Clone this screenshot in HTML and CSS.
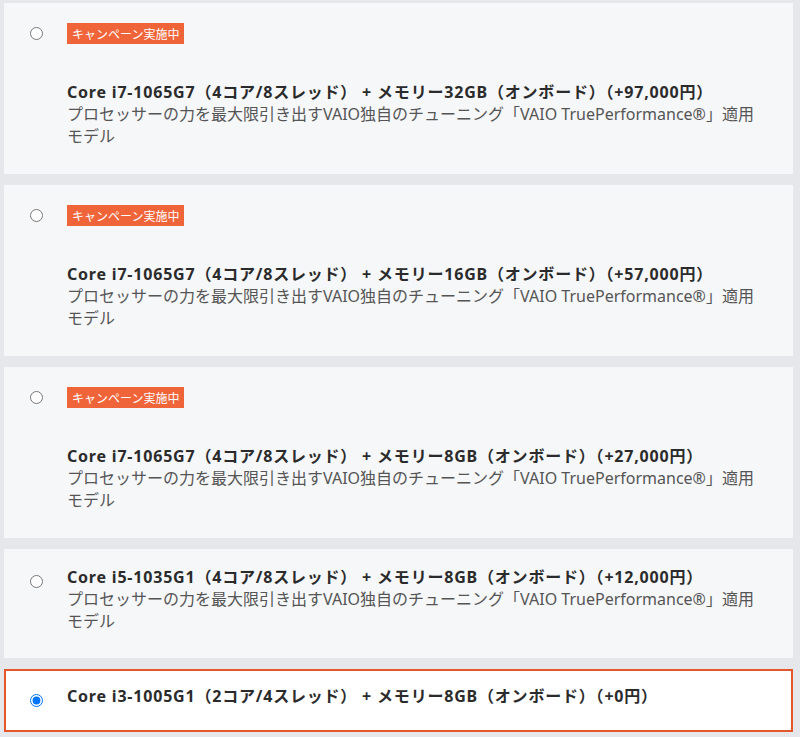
FILE: index.html
```html
<!DOCTYPE html>
<html lang="ja">
<head>
<meta charset="utf-8">
<title>CPU選択</title>
<link rel="stylesheet" href="styles.css">
</head>
<body>
<div class="options">
  <label class="card card--badge">
    <input class="radio" type="radio" name="cpu">
    <div class="content">
      <span class="badge">キャンペーン実施中</span>
      <div class="title">Core i7-1065G7（4コア/8スレッド） + メモリー32GB（オンボード）（+97,000円）</div>
      <div class="desc">プロセッサーの力を最大限引き出すVAIO独自のチューニング「VAIO TruePerformance®」適用モデル</div>
    </div>
  </label>
  <label class="card card--badge">
    <input class="radio" type="radio" name="cpu">
    <div class="content">
      <span class="badge">キャンペーン実施中</span>
      <div class="title">Core i7-1065G7（4コア/8スレッド） + メモリー16GB（オンボード）（+57,000円）</div>
      <div class="desc">プロセッサーの力を最大限引き出すVAIO独自のチューニング「VAIO TruePerformance®」適用モデル</div>
    </div>
  </label>
  <label class="card card--badge">
    <input class="radio" type="radio" name="cpu">
    <div class="content">
      <span class="badge">キャンペーン実施中</span>
      <div class="title">Core i7-1065G7（4コア/8スレッド） + メモリー8GB（オンボード）（+27,000円）</div>
      <div class="desc">プロセッサーの力を最大限引き出すVAIO独自のチューニング「VAIO TruePerformance®」適用モデル</div>
    </div>
  </label>
  <label class="card">
    <input class="radio" type="radio" name="cpu">
    <div class="content">
      <div class="title">Core i5-1035G1（4コア/8スレッド） + メモリー8GB（オンボード）（+12,000円）</div>
      <div class="desc">プロセッサーの力を最大限引き出すVAIO独自のチューニング「VAIO TruePerformance®」適用モデル</div>
    </div>
  </label>
  <label class="card card--selected">
    <input class="radio" type="radio" name="cpu" checked>
    <div class="content">
      <div class="title">Core i3-1005G1（2コア/4スレッド） + メモリー8GB（オンボード）（+0円）</div>
    </div>
  </label>
</div>
</body>
</html>
```

FILE: styles.css
```css
html, body {
  margin: 0;
  padding: 0;
  background: #e5e7ea;
}

body {
  font-family: "Noto Sans", "Noto Sans CJK JP", sans-serif;
  font-size: 16px;
  line-height: 22px;
  color: #333;
}

.options {
  display: flex;
  flex-direction: column;
  gap: 11px;
  padding: 3px 7px 0 4px;
}

.card {
  display: flex;
  align-items: flex-start;
  background: #f6f7f9;
  padding: 17px 30px 26px 26px;
  cursor: pointer;
}

.card--badge {
  padding-top: 20px;
  padding-bottom: 27px;
}

.card--selected {
  background: #fff;
  border: 2px solid #e2572c;
  padding: 14px 28px 23px 24px;
}

.radio {
  width: 13px;
  height: 13px;
  margin: 9px 24px 0 0;
  flex: none;
}

.card--badge .radio {
  margin-top: 4px;
}

.content {
  display: flex;
  flex-direction: column;
  align-items: flex-start;
  min-width: 0;
}

.badge {
  display: inline-block;
  background: #f0643a;
  color: #fff;
  font-family: "Noto Sans CJK JP", sans-serif;
  font-size: 12px;
  line-height: 21px;
  height: 21px;
  padding: 0 5px;
  margin-bottom: 37px;
}

.title {
  font-weight: bold;
  color: #2b2b2b;
  letter-spacing: 0.8px;
  white-space: nowrap;
}

.desc {
  color: #555;
}
```
